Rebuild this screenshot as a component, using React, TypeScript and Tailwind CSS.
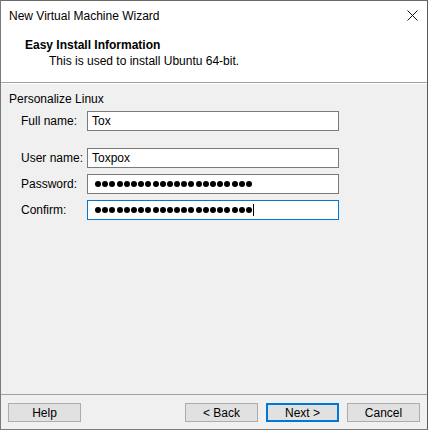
import React from "react";

const font = { fontFamily: '"Liberation Sans", Arial, sans-serif' };

function Dots({ n }: { n: number }) {
  return (
    <div className="flex items-center gap-[1.2px] ml-[3px]">
      {Array.from({ length: n }).map((_, i) => (
        <span key={i} className="block w-[6px] h-[6px] rounded-full bg-black" />
      ))}
    </div>
  );
}

function Field({
  label,
  children,
  focused,
}: {
  label: string;
  children: React.ReactNode;
  focused?: boolean;
}) {
  return (
    <div className="flex items-center h-[20px]">
      <div className="w-[78px] shrink-0 pl-[12px] text-[12px] text-black leading-none whitespace-nowrap">
        {label}
      </div>
      <div
        className={
          "w-[252px] h-[20px] bg-white flex items-center pl-[4px] border " +
          (focused ? "border-[#0078d7]" : "border-[#7a7a7a]")
        }
      >
        {children}
      </div>
    </div>
  );
}

function Btn({ label, primary }: { label: string; primary?: boolean }) {
  return (
    <div
      className={
        "w-[73px] h-[19px] bg-[#e1e1e1] flex items-center justify-center text-[12px] text-black " +
        (primary ? "border-2 border-[#0078d7]" : "border border-[#adadad]")
      }
    >
      {label}
    </div>
  );
}

export default function App() {
  return (
    <div
      className="w-[428px] h-[430px] flex flex-col bg-white border-x border-b border-t border-[#7a7a7a] border-r-[#5a5a5a] border-t-[#6a6a6a] overflow-hidden"
      style={font}
    >
      {/* Title bar */}
      <div className="h-[29px] flex items-center justify-between pl-[8px] pr-[9px] shrink-0">
        <span className="text-[12px] text-black">New Virtual Machine Wizard</span>
        <svg width="11" height="11" viewBox="0 0 11 11" className="mb-[1px]">
          <path d="M0.5 0.5 L10.5 10.5 M10.5 0.5 L0.5 10.5" stroke="#111" strokeWidth="1" />
        </svg>
      </div>
      {/* Header */}
      <div className="h-[53px] shrink-0 bg-white pl-[24px] pt-[7px] border-b border-[#a0a0a0]">
        <div className="text-[12px] font-bold text-black leading-[16px]">Easy Install Information</div>
        <div className="text-[12px] text-black leading-[16px] pl-[24px]">
          This is used to install Ubuntu 64-bit.
        </div>
      </div>
      {/* Body */}
      <div className="flex-1 bg-[#f0f0f0] border-t border-white pt-[7px] pl-[8px] flex flex-col">
        <div className="text-[12px] text-black leading-[16px]">Personalize Linux</div>
        <div className="flex flex-col mt-[4px]">
          <Field label="Full name:">
            <span className="text-[12px] text-black">Tox</span>
          </Field>
          <div className="h-[17px]" />
          <Field label="User name:">
            <span className="text-[12px] text-black">Toxpox</span>
          </Field>
          <div className="h-[6px]" />
          <Field label="Password:">
            <Dots n={22} />
          </Field>
          <div className="h-[6px]" />
          <Field label="Confirm:" focused>
            <Dots n={22} />
            <span className="block w-[1px] h-[12px] bg-black ml-[1px]" />
          </Field>
        </div>
      </div>
      {/* Footer */}
      <div className="h-[35px] shrink-0 bg-[#f0f0f0] border-t border-[#a0a0a0] flex items-start pt-[8px] px-[7px]">
        <Btn label="Help" />
        <div className="flex-1" />
        <div className="flex gap-[8px]">
          <Btn label="< Back" />
          <Btn label="Next >" primary />
          <Btn label="Cancel" />
        </div>
      </div>
    </div>
  );
}
